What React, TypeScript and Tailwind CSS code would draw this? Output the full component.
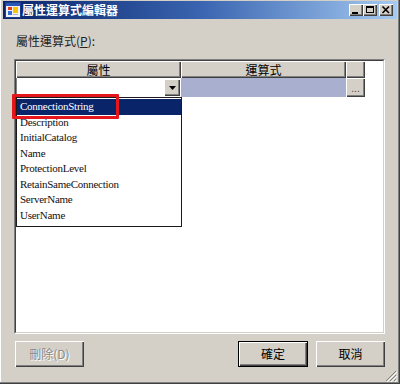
const cjk = "font-['Noto_Sans_CJK_TC','Noto_Sans',sans-serif]"

const raised = 'bg-[#d4d0c8] shadow-[inset_1px_1px_#ffffff,inset_-1px_-1px_#404040,inset_-2px_-2px_#808080]'

const props = [
  'ConnectionString',
  'Description',
  'InitialCatalog',
  'Name',
  'ProtectionLevel',
  'RetainSameConnection',
  'ServerName',
  'UserName',
]

function AppIcon() {
  return (
    <svg width="16" height="16" viewBox="0 0 16 16" className="shrink-0">
      <rect x="0.5" y="0.5" width="15" height="15" fill="#eef0f6" stroke="#1c3c8c" />
      <rect x="1" y="1" width="14" height="3" fill="#2a56b8" />
      <rect x="3" y="5" width="4" height="3" fill="#e2401c" />
      <rect x="8" y="5" width="5" height="6" fill="#f6c400" />
      <rect x="3" y="9" width="4" height="4" fill="#3a6ad8" />
      <rect x="8" y="12" width="5" height="1" fill="#b0b4c0" />
    </svg>
  )
}

function CaptionButton({ kind }: { kind: 'min' | 'max' | 'close' }) {
  return (
    <div className={`w-[14px] h-[12px] flex items-center justify-center ${raised}`}>
      <svg width="14" height="12" viewBox="0 0 14 12">
        {kind === 'min' && <rect x="3" y="8" width="6" height="2" fill="#000" />}
        {kind === 'max' && (
          <>
            <rect x="3.5" y="2.5" width="7" height="6" fill="none" stroke="#000" />
            <rect x="3" y="2" width="8" height="2" fill="#000" />
          </>
        )}
        {kind === 'close' && (
          <path d="M3.5 2.5 L10 9 M10 2.5 L3.5 9" stroke="#000" strokeWidth={1.6} />
        )}
      </svg>
    </div>
  )
}

export default function App() {
  return (
    <div className="w-[400px] h-[384px] bg-[#d4d0c8] flex flex-col pt-[1px] px-[3px] shadow-[inset_-1px_-1px_#404040,inset_-2px_-2px_#808080,inset_1px_0_#ffffff]">
      {/* Title bar */}
      <div className="h-[18px] flex items-center pl-[2px] pr-[4px] bg-linear-to-r from-[#0a246a] via-[#3a64b0] to-[#a6caf0]">
        <AppIcon />
        <span className={`ml-[1px] text-[12px] leading-none font-bold text-white ${cjk}`}>屬性運算式編輯器</span>
        <div className="ml-auto flex items-center">
          <CaptionButton kind="min" />
          <CaptionButton kind="max" />
          <div className="w-[2px]" />
          <CaptionButton kind="close" />
        </div>
      </div>

      {/* Label */}
      <div className={`mt-[14px] ml-[13px] text-[12px] leading-[16px] text-[#222] ${cjk}`}>
        屬性運算式(<span className="underline">P</span>):
      </div>

      {/* Grid */}
      <div className="relative mt-[10px] ml-[11px] w-[371px] h-[275px] border border-t-[#808080] border-l-[#808080] border-r-white border-b-white">
        <div className="w-full h-full bg-white border border-t-[#404040] border-l-[#404040] border-r-[#d4d0c8] border-b-[#d4d0c8] flex flex-col">
          {/* Header row */}
          <div className={`flex h-[17px] text-[12px] leading-none text-black ${cjk}`}>
            <div className={`w-[165px] flex items-center justify-center ${raised}`}>屬性</div>
            <div className={`w-[165px] flex items-center justify-center ${raised}`}>運算式</div>
            <div className={`w-[19px] ${raised}`} />
          </div>
          {/* Edit row */}
          <div className="flex h-[19px]">
            <div className="w-[165px] bg-white flex items-center justify-end pr-[1px] border-l border-[#808080]">
              <div className={`w-[16px] h-[17px] flex items-center justify-center ${raised}`}>
                <svg width="7" height="4" viewBox="0 0 7 4">
                  <path d="M0 0 H7 L3.5 4 Z" fill="#000" />
                </svg>
              </div>
            </div>
            <div className="w-[165px] bg-[#a9b0cf]" />
            <div className={`w-[19px] flex items-end justify-center pb-[3px] text-[10px] leading-none text-[#444] font-['Liberation_Sans',sans-serif] ${raised}`}>
              ...
            </div>
          </div>
        </div>

        {/* Dropdown list */}
        <div className="absolute left-[1px] top-[37px] w-[166px] bg-white border border-[#1a1a1a] pt-[1px] pb-[3px]">
          {props.map((p, i) => (
            <div
              key={p}
              className={`h-[15.5px] pl-[3px] text-[11px] leading-[15.5px] tracking-[-0.25px] font-['Liberation_Serif',serif] ${
                i === 0 ? 'bg-[#0a246a] text-white' : 'text-[#111]'
              }`}
            >
              {p}
            </div>
          ))}
        </div>

        {/* Highlight marker */}
        <div className="absolute left-[-3px] top-[34px] w-[107px] h-[25px] border-[3px] border-[#e5171c] rounded-[1px]" />
      </div>

      {/* Buttons */}
      <div className={`mt-[7px] ml-[12px] w-[370px] flex text-[12px] ${cjk}`}>
        <div className={`w-[69px] h-[26px] flex items-center justify-center text-[#8a8a8a] [text-shadow:1px_1px_#ffffff] ${raised}`}>
          刪除(D)
        </div>
        <div className="ml-auto w-[70px] h-[26px] border border-black">
          <div className={`w-full h-full flex items-center justify-center text-black ${raised}`}>確定</div>
        </div>
        <div className={`ml-[8px] w-[69px] h-[26px] flex items-center justify-center text-black ${raised}`}>取消</div>
      </div>

      {/* Size grip */}
      <div className="mt-[3px] flex justify-end pr-[0px]">
        <svg width="12" height="12" viewBox="0 0 12 12">
          <path d="M11 1 L1 11 M11 5 L5 11 M11 9 L9 11" stroke="#808080" strokeWidth={1} />
          <path d="M12 2 L2 12 M12 6 L6 12 M12 10 L10 12" stroke="#ffffff" strokeWidth={1} />
        </svg>
      </div>
    </div>
  )
}
